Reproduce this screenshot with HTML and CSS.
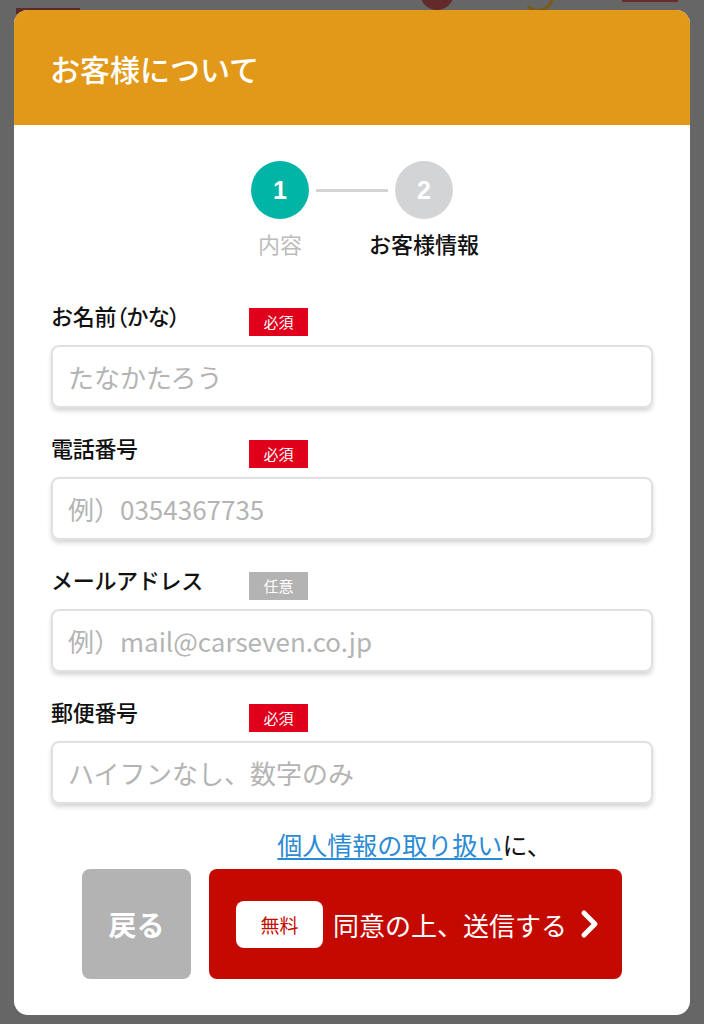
FILE: index.html
```html
<!DOCTYPE html>
<html lang="ja">
<head>
<meta charset="utf-8">
<title>お客様について</title>
<link rel="stylesheet" href="styles.css">
</head>
<body>
<div class="backdrop">
  <span class="bd bd-a"></span>
  <span class="bd bd-b"></span>
  <span class="bd bd-c"></span>
  <span class="bd bd-d"></span>
</div>
<div class="modal">
  <div class="modal-head">お客様について</div>
  <div class="modal-body">
    <div class="steps">
      <div class="step">
        <div class="circle active">1</div>
        <div class="step-label">内容</div>
      </div>
      <div class="step-line"></div>
      <div class="step">
        <div class="circle">2</div>
        <div class="step-label current">お客様情報</div>
      </div>
    </div>

    <div class="field">
      <div class="field-head"><span class="label">お名前<span class="paren">（かな）</span></span><span class="badge req">必須</span></div>
      <div class="input"><span class="ph">たなかたろう</span></div>
    </div>
    <div class="field">
      <div class="field-head"><span class="label">電話番号</span><span class="badge req">必須</span></div>
      <div class="input"><span class="ph">例）0354367735</span></div>
    </div>
    <div class="field">
      <div class="field-head"><span class="label">メールアドレス</span><span class="badge opt">任意</span></div>
      <div class="input"><span class="ph">例）mail@carseven.co.jp</span></div>
    </div>
    <div class="field">
      <div class="field-head"><span class="label">郵便番号</span><span class="badge req">必須</span></div>
      <div class="input"><span class="ph">ハイフンなし、数字のみ</span></div>
    </div>

    <div class="actions">
      <div class="consent"><a href="#">個人情報の取り扱い</a>に、</div>
      <div class="btn back">戻る</div>
      <div class="btn submit">
        <span class="free">無料</span>
        <span class="submit-text">同意の上、送信する</span>
        <svg class="chev" width="22" height="30" viewBox="0 0 22 30"><path d="M5 4 L16 15 L5 26" fill="none" stroke="#fff" stroke-width="5" stroke-linecap="round" stroke-linejoin="round"/></svg>
      </div>
    </div>
  </div>
</div>
</body>
</html>
```

FILE: styles.css
```css
html, body {
  margin: 0;
  padding: 0;
}
body {
  background: #666666;
  font-family: "Noto Sans CJK JP", "Noto Sans", sans-serif;
  min-height: 1024px;
  position: relative;
  padding-top: 10px;
  box-sizing: border-box;
}
.backdrop {
  position: absolute;
  left: 0;
  top: 0;
  width: 704px;
  height: 20px;
  overflow: hidden;
}
.bd { position: absolute; display: block; }
.bd-a { left: 16px; top: 8px; width: 64px; height: 6px; background: #5a2a2a; }
.bd-b { left: 420px; top: -24px; width: 34px; height: 34px; border-radius: 50%; background: #622a2a; }
.bd-c { left: 522px; top: -20px; width: 26px; height: 26px; border-radius: 50%; border: 3px solid #7a5a14; border-top-color: transparent; border-left-color: transparent; }
.bd-d { left: 622px; top: 0; width: 56px; height: 2px; background: #6a2a2a; }

.modal {
  position: relative;
  margin: 0 14px;
  background: #fff;
  border-radius: 14px;
  overflow: hidden;
}
.modal-head {
  background: #e2991a;
  color: #fff;
  font-weight: 500;
  font-size: 30px;
  height: 115px;
  line-height: 116px;
  padding-left: 36px;
}
.modal-body {
  padding: 36px 37px 36px 37px;
}
.steps {
  display: flex;
  justify-content: center;
  align-items: flex-start;
  margin-left: 0;
  margin-bottom: 43px;
}
.step {
  width: 120px;
  display: flex;
  flex-direction: column;
  align-items: center;
}
.circle {
  width: 58px;
  height: 58px;
  border-radius: 50%;
  background: #d2d4d5;
  color: #fff;
  font-family: "Liberation Sans", Arial, sans-serif;
  font-weight: 700;
  font-size: 25px;
  line-height: 58px;
  text-align: center;
}
.circle.active { background: #00b5a6; }
.step-line {
  width: 72px;
  height: 3px;
  background: #d4d4d4;
  margin: 28px -24px 0;
}
.step-label {
  margin-top: 10px;
  font-size: 22px;
  line-height: 28px;
  color: #bcbcbc;
  white-space: nowrap;
}
.step-label.current {
  color: #111;
  font-weight: 500;
}

.field { margin-bottom: 24px; }
.field-head {
  display: flex;
  align-items: flex-start;
  height: 36px;
}
.label {
  width: 198px;
  font-size: 22px;
  line-height: 30px;
  font-weight: 500;
  color: #111;
  white-space: nowrap;
  letter-spacing: -0.3px;
}
.paren {
  font-feature-settings: "palt";
}
.badge {
  margin-top: 8px;
  width: 59px;
  height: 28px;
  line-height: 28px;
  text-align: center;
  font-size: 15px;
  color: #fff;
}
.badge.req { background: #e0001b; }
.badge.opt { background: #b3b3b3; }
.input {
  margin-top: 9px;
  height: 63px;
  box-sizing: border-box;
  border: 2px solid #e0e0e0;
  border-radius: 8px;
  box-shadow: 0 3px 4px rgba(0, 0, 0, 0.16);
  padding-left: 15px;
  display: flex;
  align-items: center;
}
.ph {
  font-size: 26px;
  color: #b4b4b4;
  white-space: nowrap;
}

.actions {
  display: grid;
  grid-template-columns: 109px 413px;
  column-gap: 18px;
  justify-content: center;
  row-gap: 9px;
}
.consent {
  grid-column: 2;
  text-align: center;
  font-size: 25px;
  line-height: 32px;
  color: #111;
  white-space: nowrap;
  margin-left: -2px;
}
.consent a {
  color: #2a8ad4;
  text-decoration: underline;
  text-underline-offset: 3px;
}
.btn {
  height: 110px;
  border-radius: 8px;
  display: flex;
  align-items: center;
  justify-content: center;
  color: #fff;
}
.back {
  grid-column: 1;
  grid-row: 2;
  background: #b3b3b3;
  font-size: 28px;
  font-weight: 700;
}
.submit {
  grid-column: 2;
  grid-row: 2;
  background: #c40a00;
  justify-content: flex-start;
  padding-left: 27px;
}
.free {
  width: 87px;
  height: 47px;
  border-radius: 8px;
  background: #fff;
  color: #c40a00;
  font-size: 19px;
  line-height: 47px;
  text-align: center;
}
.submit-text {
  margin-left: 10px;
  font-size: 26px;
  white-space: nowrap;
}
.chev {
  margin-left: 12px;
}
```
